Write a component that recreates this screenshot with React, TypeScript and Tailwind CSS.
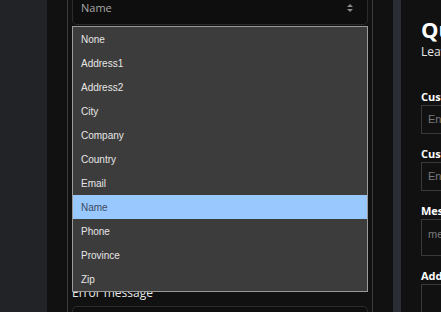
import React from 'react';

const fieldOptions = [
  'None',
  'Address1',
  'Address2',
  'City',
  'Company',
  'Country',
  'Email',
  'Name',
  'Phone',
  'Province',
  'Zip',
];

function SortIcon() {
  return (
    <svg width="8" height="10" viewBox="0 0 8 10" className="text-[#8a8a8a]">
      <path d="M4 1 L7 4 H1 Z" fill="currentColor" />
      <path d="M4 9 L7 6 H1 Z" fill="currentColor" />
    </svg>
  );
}

function OptionList({ selected }: { selected: string }) {
  return (
    <div className="absolute left-[4px] top-[26px] w-[296px] border border-[#9a9a9a] bg-[#3c3c3c] font-['Liberation_Sans',Arial,sans-serif] text-[10px]">
      {fieldOptions.map(opt => (
        <div
          key={opt}
          className={`flex h-[24px] items-center px-[8px] ${
            opt === selected ? 'bg-[#99c8ff] text-[#3e4a5c]' : 'text-[#e6e6e6]'
          }`}
        >
          {opt}
        </div>
      ))}
    </div>
  );
}

function TextField({ label, placeholder, tall }: { label: string; placeholder: string; tall?: boolean }) {
  return (
    <div className="flex shrink-0 flex-col">
      <span className="text-[11px] font-bold leading-[14px] text-white whitespace-nowrap">{label}</span>
      <div
        className={`mt-[1px] flex w-[260px] border border-[#3a3a3a] px-[6px] font-['Liberation_Sans',Arial,sans-serif] text-[11px] text-[#7a7a7a] ${
          tall ? 'h-[37px] items-start pt-[6px]' : 'h-[29px] items-center'
        }`}
      >
        {placeholder}
      </div>
    </div>
  );
}

export default function App() {
  return (
    <div className="flex h-[312px] w-[441px] overflow-hidden bg-[#111111] font-['Open_Sans',sans-serif]">
      {/* Sidebar */}
      <aside className="w-[47px] shrink-0 bg-[#222326]" />

      {/* Field editor card */}
      <div className="relative ml-[20px] flex w-[306px] shrink-0 flex-col border-x border-[#3a3a3a] px-[4px]">
        <div className="-mt-[9px] flex h-[34px] shrink-0 items-center justify-between rounded-b-[5px] border border-[#2c2c2c] bg-[#0e0e0e] pl-[8px] pr-[13px]">
          <span className="text-[11px] text-[#a8a8a8]">Name</span>
          <SortIcon />
        </div>

        <span className="mt-[260px] shrink-0 text-[12px] leading-[16px] text-[#e8e8e8]">Error message</span>
        <div className="mt-[5px] h-[30px] shrink-0 rounded-[5px] border border-[#2c2c2c] bg-[#0e0e0e]" />

        <OptionList selected="Name" />
      </div>

      {/* Divider strip */}
      <div className="ml-[20px] w-[8px] shrink-0 bg-[#2a2d34]" />

      {/* Preview form */}
      <main className="flex min-w-0 flex-1 flex-col pl-[20px] pt-[14px]">
        <h1 className="shrink-0 text-[22px] font-bold leading-[30px] text-white whitespace-nowrap">Quote Request</h1>
        <p className="shrink-0 text-[12px] leading-[16px] text-[#e8e8e8] whitespace-nowrap">Leave your details below</p>

        <div className="mt-[30px] flex shrink-0 flex-col gap-[13px]">
          <TextField label="Customer Name" placeholder="Enter name" />
          <TextField label="Customer Email" placeholder="Enter email" />
          <TextField label="Message" placeholder="message" tall />
          <TextField label="Address" placeholder="" tall />
        </div>
      </main>
    </div>
  );
}
